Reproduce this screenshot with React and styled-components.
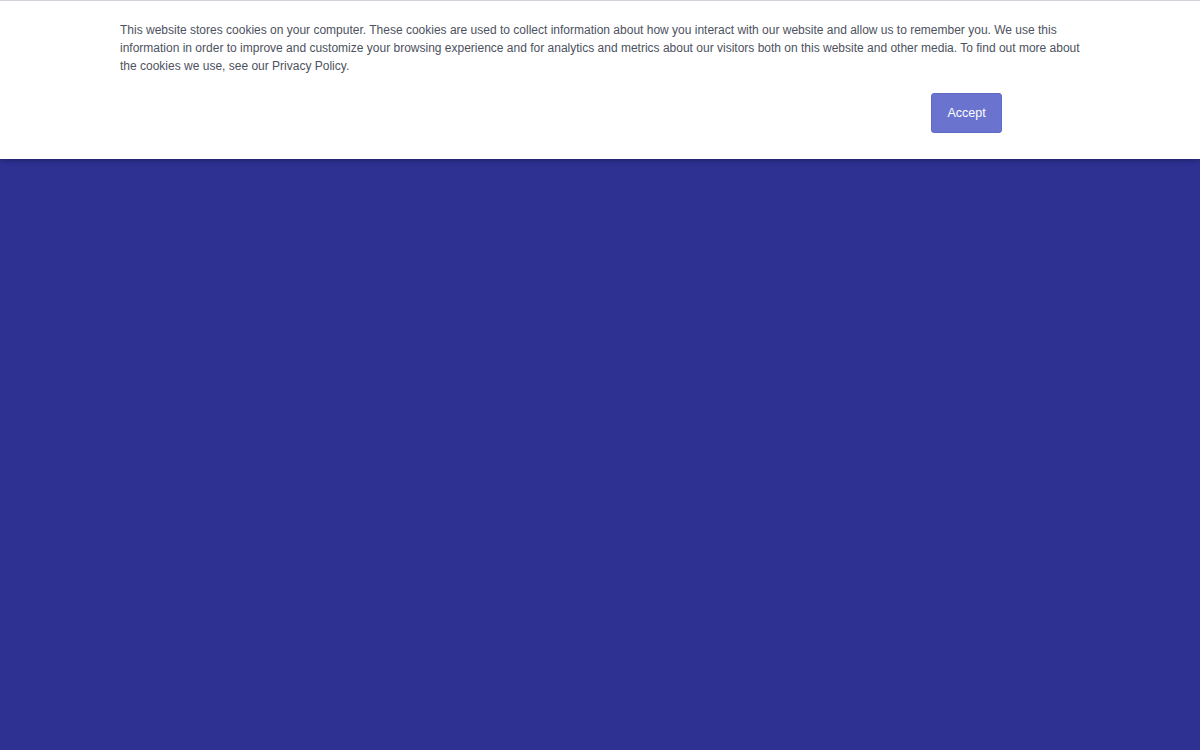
import styled, { createGlobalStyle } from "styled-components"

const GlobalStyle = createGlobalStyle`
html, body {
  margin: 0;
  padding: 0;
  background: #2e3192;
  font-family: "Liberation Sans", Arial, sans-serif;
}
`

const Page = styled.div`
width: 1200px;
height: 750px;
background: #2e3192;
position: relative;
overflow: hidden;
`

const Banner = styled.div`
background: #fff;
border-top: 1px solid #d0d3d9;
height: 159px;
box-sizing: border-box;
box-shadow: 0 1px 6px rgba(0, 0, 0, 0.35);
padding: 20px 120px 0 120px;
display: flex;
flex-direction: column;
`

const Message = styled.p`
margin: 0;
font-size: 12px;
line-height: 18px;
color: #4d5260;
width: 965px;
`

const Actions = styled.div`
display: flex;
justify-content: flex-end;
width: 882px;
margin-top: 18px;
`

const AcceptButton = styled.button`
width: 71px;
height: 40px;
background: #6a74cf;
color: #fff;
border: 1px solid #5f69c6;
border-radius: 3px;
font-family: "Liberation Sans", Arial, sans-serif;
font-size: 12.5px;
padding: 0;
cursor: pointer;
`

const App = () => {
  return (
    <Page>
      <GlobalStyle />
      <Banner>
        <Message>
          This website stores cookies on your computer. These cookies are used to collect information about how you interact with our website and allow us to remember you. We use this information in order to improve and customize your browsing experience and for analytics and metrics about our visitors both on this website and other media. To find out more about the cookies we use, see our Privacy Policy.
        </Message>
        <Actions>
          <AcceptButton>Accept</AcceptButton>
        </Actions>
      </Banner>
    </Page>
  )
}

export default App
